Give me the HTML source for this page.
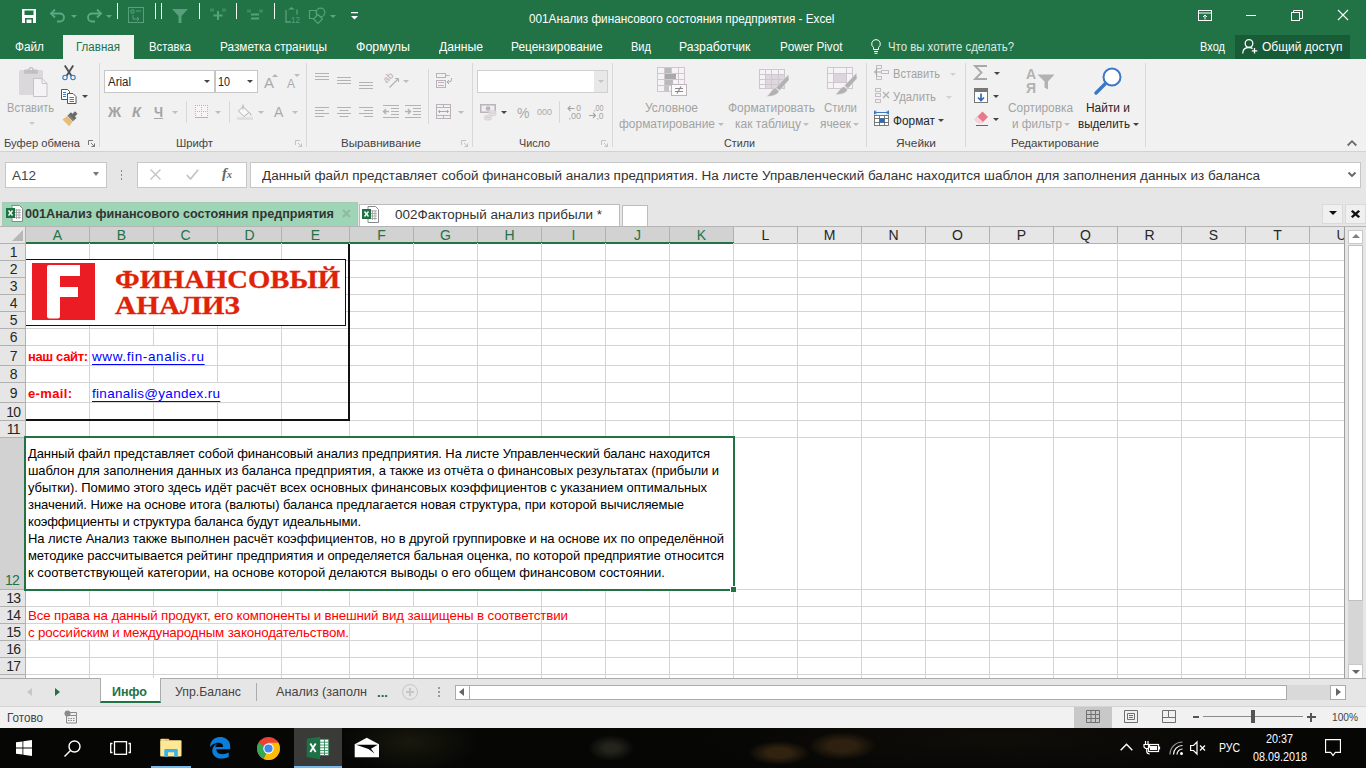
<!DOCTYPE html>
<html lang="ru"><head><meta charset="utf-8"><title>Excel</title>
<style>
*{box-sizing:border-box;margin:0;padding:0}
html,body{width:1366px;height:768px;overflow:hidden;background:#e6e6e6;font-family:"Liberation Sans",sans-serif;font-size:12px;color:#444}
.abs,.abs *{position:absolute}
#root{position:absolute;left:0;top:0;width:1366px;height:768px;overflow:hidden}
.t{position:absolute;white-space:nowrap;line-height:1}
svg{position:absolute;overflow:visible}
/* title */
#title{left:0;top:0;width:1366px;height:59px;background:#217346}
#title .t{color:#fff}
#hometab{left:63px;top:35px;width:71px;height:25px;background:#f1f1f1}
/* ribbon */
#ribbon{left:0;top:59px;width:1366px;height:93px;background:#f1f1f1;border-bottom:1px solid #d2d2d2}
.sep{position:absolute;top:4px;width:1px;height:84px;background:#dadada}
.glabel{color:#444;font-size:12px}
.dis{color:#a6a6a6}
/* formula bar */
#fbar{left:0;top:152px;width:1366px;height:48px;background:#e6e6e6}
.box{position:absolute;background:#fff;border:1px solid #c6c6c6}
</style></head><body><div id="root">
<div id="title" class="abs">
  <!-- QAT -->
  <svg style="left:22px;top:9px" width="14" height="14" viewBox="0 0 14 14"><path d="M0 0h14v14H0z" fill="#fff"/><rect x="2.5" y="1.5" width="9" height="4.5" fill="#217346"/><rect x="3" y="9" width="8" height="5" fill="#217346"/><rect x="4.5" y="10.5" width="5" height="3.5" fill="#fff"/></svg>
  <svg style="left:50px;top:9px" width="16" height="13" viewBox="0 0 16 13" fill="none" stroke="#5ea783" stroke-width="1.8"><path d="M1 4.5h9a4 4 0 0 1 0 8h-3"/><path d="M5 0.5L1 4.5l4 4"/></svg>
  <svg style="left:71px;top:15px" width="6" height="3" viewBox="0 0 6 3"><path d="M0 0h6L3 3z" fill="#5ea783"/></svg>
  <svg style="left:86px;top:9px" width="16" height="13" viewBox="0 0 16 13" fill="none" stroke="#5ea783" stroke-width="1.8"><path d="M15 4.5h-9a4 4 0 0 0 0 8h3"/><path d="M11 0.5l4 4-4 4"/></svg>
  <svg style="left:106px;top:15px" width="6" height="3" viewBox="0 0 6 3"><path d="M0 0h6L3 3z" fill="#5ea783"/></svg>
  <div style="left:117px;top:3px;width:1px;height:16px;background:#f2f8f4"></div>
  <svg style="left:128px;top:7px" width="16" height="16" viewBox="0 0 16 16" fill="none" stroke="#57a07b" stroke-width="1"><rect x=".5" y=".5" width="15" height="15"/><path d="M3 3h3v3H3zM8 4h5M5 8v4h6M9 10l2 2-2 2" /></svg>
  <div style="left:155px;top:3px;width:1px;height:16px;background:#f2f8f4"></div>
  <div style="left:161px;top:3px;width:1px;height:16px;background:#f2f8f4"></div>
  <svg style="left:172px;top:9px" width="16" height="14" viewBox="0 0 16 14"><path d="M0 0h16L9.5 7v7h-3V7z" fill="#57a07b"/></svg>
  <div style="left:199px;top:3px;width:1px;height:16px;background:#f2f8f4"></div>
  <svg style="left:209px;top:6px" width="18" height="16" viewBox="209 6 18 16" fill="none" stroke="#57a07b"><path d="M211 8.500v3M213 8.500v3M223 8.500v3M225 8.500v3" stroke-width="1"/><path d="M213.500 15.500h9M218 11v9" stroke-width="2"/></svg>
  <div style="left:236px;top:3px;width:1px;height:16px;background:#f2f8f4"></div>
  <svg style="left:246px;top:6px" width="18" height="16" viewBox="246 6 18 16" fill="none" stroke="#57a07b"><path d="M248 9.500v3M250 9.500v3M260 9.500v3M262 9.500v3" stroke-width="1"/><path d="M251 14.500h8M251 18.500h8" stroke-width="2"/></svg>
  <div style="left:274px;top:3px;width:1px;height:16px;background:#f2f8f4"></div>
  <svg style="left:284px;top:6px" width="17" height="18" viewBox="284 6 17 18" fill="none" stroke="#57a07b" stroke-width="1.300"><path d="M286 10v12h5"/><path d="M288 9.500l3.500-2.500 3.500 2.500z" fill="#57a07b" stroke="none"/><path d="M297 9.500v5"/><text x="291" y="22.500" font-size="8.500" fill="#57a07b" stroke="none" font-family="Liberation Sans" textLength="9" lengthAdjust="spacingAndGlyphs">12</text></svg>
  <svg style="left:308px;top:6px" width="18" height="18" viewBox="308 6 18 18" fill="none" stroke="#57a07b" stroke-width="1.200"><path d="M309.500 10.500h7v8h-7z"/><circle cx="320.500" cy="12.500" r="4.300"/><path d="M318 14.500l4.500 4.500-4.500 4.500-4.500-4.500z" fill="#217346"/></svg>
  <svg style="left:330px;top:15px" width="6" height="3" viewBox="0 0 6 3"><path d="M0 0h6L3 3z" fill="#5ea783"/></svg>
  <svg style="left:351px;top:12px" width="7" height="8" viewBox="0 0 7 8"><path d="M0 0h7v1.2H0z M0 4h7L3.5 7.5z" fill="#fff"/></svg>
  <!-- title text -->
  <div class="t" id="ttl" style="transform-origin:0 0;transform:scaleX(0.9779);left:529px;top:13px;font-size:12px">001Анализ финансового состояния предприятия - Excel</div>
  <!-- window controls -->
  <svg style="left:1198px;top:10px" width="14" height="11" viewBox="0 0 14 11" fill="none" stroke="#fff" stroke-width="1"><rect x=".5" y=".5" width="13" height="10"/><path d="M.5 3h13" /><path d="M7 9.5V5M5 7l2-2 2 2"/></svg>
  <div style="left:1246px;top:15px;width:10px;height:1px;background:#fff"></div>
  <svg style="left:1291px;top:10px" width="12" height="11" viewBox="0 0 12 11" fill="none" stroke="#fff" stroke-width="1"><rect x=".5" y="2.5" width="8" height="8"/><path d="M2.5 2.5v-2h9v8h-3"/></svg>
  <svg style="left:1338px;top:10px" width="10" height="10" viewBox="0 0 10 10" fill="none" stroke="#fff" stroke-width="1.1"><path d="M0 0l10 10M10 0L0 10"/></svg>
  <!-- tabs -->
  <div id="hometab"></div>
  <div class="t tb" style="transform-origin:0 0;transform:scaleX(0.9436);left:15px">Файл</div>
  <div class="t tb" style="transform-origin:0 0;transform:scaleX(0.9248);left:76px;color:#217346">Главная</div>
  <div class="t tb" style="transform-origin:0 0;transform:scaleX(0.9038);left:149px">Вставка</div>
  <div class="t tb" style="transform-origin:0 0;transform:scaleX(0.9435);left:220px">Разметка страницы</div>
  <div class="t tb" style="transform-origin:0 0;transform:scaleX(0.9925);left:356px">Формулы</div>
  <div class="t tb" style="transform-origin:0 0;transform:scaleX(0.9741);left:438.5px">Данные</div>
  <div class="t tb" style="transform-origin:0 0;transform:scaleX(0.9479);left:511px">Рецензирование</div>
  <div class="t tb" style="transform-origin:0 0;transform:scaleX(0.8840);left:631px">Вид</div>
  <div class="t tb" style="transform-origin:0 0;transform:scaleX(0.9807);left:679px">Разработчик</div>
  <div class="t tb" style="transform-origin:0 0;transform:scaleX(0.9370);left:779.5px">Power Pivot</div>
  <svg style="left:871px;top:39px" width="10" height="15" viewBox="0 0 10 15" fill="none" stroke="#fff" stroke-width="1"><path d="M5 .6a4.3 4.300 0 0 0-2.500 7.800V10.500h5V8.400A4.300 4.300 0 0 0 5 .6z"/><path d="M3 12.500h4M3.500 14.300h3"/></svg>
  <div class="t tb" style="transform-origin:0 0;transform:scaleX(0.9118);left:888px;color:#dcebe2">Что вы хотите сделать?</div>
  <div class="t tb" style="transform-origin:0 0;transform:scaleX(0.8840);left:1200px">Вход</div>
  <div style="left:1235px;top:35px;width:115px;height:24px;background:#185c37"></div>
  <svg style="left:1242px;top:39px" width="16" height="15" viewBox="0 0 16 15" fill="none" stroke="#fff" stroke-width="1.300"><circle cx="7" cy="4.500" r="3.800"/><path d="M.7 14.500c0-4 2.800-6 6.300-6 1.500 0 2.700.4 3.600 1"/><path d="M12.500 9v5.500M9.800 11.800h5.500"/></svg>
  <div class="t tb" style="transform-origin:0 0;transform:scaleX(0.9585);left:1261.5px">Общий доступ</div>
</div>
<style>.tb{top:41.400px;font-size:12.500px}</style>
<div id="ribbon" class="abs"></div>
<div class="abs" id="rb" style="left:0;top:0;width:1366px;height:152px">
<style>
#rb .t{font-size:12.5px}
#rb .lb{top:137.500px;color:#444;font-size:11px}
#rb .d{color:#a3a3a3}
#rb .k{color:#262626}
.vs{position:absolute;width:1px;background:#d8d8d8}
.ar{position:absolute;width:0;height:0;border-left:3px solid transparent;border-right:3px solid transparent;border-top:3px solid #bdbdbd}
.ar.k{border-top-color:#444}
</style>
<!-- group separators -->
<div class="vs" style="left:99px;top:63px;height:84px"></div>
<div class="vs" style="left:306px;top:63px;height:84px"></div>
<div class="vs" style="left:472px;top:63px;height:84px"></div>
<div class="vs" style="left:612px;top:63px;height:84px"></div>
<div class="vs" style="left:866px;top:63px;height:84px"></div>
<div class="vs" style="left:965px;top:63px;height:84px"></div>
<div class="vs" style="left:1145px;top:63px;height:84px"></div>
<!-- group labels -->
<div class="t lb" style="transform-origin:0 0;transform:scaleX(1.0167);left:4px">Буфер обмена</div>
<div class="t lb" style="transform-origin:0 0;transform:scaleX(1.0220);left:176px">Шрифт</div>
<div class="t lb" style="transform-origin:0 0;transform:scaleX(1.0565);left:341px">Выравнивание</div>
<div class="t lb" style="transform-origin:0 0;transform:scaleX(0.9798);left:519px">Число</div>
<div class="t lb" style="transform-origin:0 0;transform:scaleX(0.9778);left:724px">Стили</div>
<div class="t lb" style="transform-origin:0 0;transform:scaleX(1.0838);left:896px">Ячейки</div>
<div class="t lb" style="transform-origin:0 0;transform:scaleX(1.0502);left:1011px">Редактирование</div>
<!-- launchers -->
<svg class="ln" style="left:88px;top:140px" width="7" height="7" viewBox="0 0 7 7" fill="none" stroke="#777" stroke-width="1"><path d="M.5 5V.5H5M3 3l3.500 3.500M6.500 3.500v3h-3"/></svg>
<svg class="ln" style="left:295px;top:140px" width="7" height="7" viewBox="0 0 7 7" fill="none" stroke="#c3c3c3" stroke-width="1"><path d="M.5 5V.5H5M3 3l3.500 3.500M6.500 3.500v3h-3"/></svg>
<svg class="ln" style="left:461px;top:140px" width="7" height="7" viewBox="0 0 7 7" fill="none" stroke="#c3c3c3" stroke-width="1"><path d="M.5 5V.5H5M3 3l3.500 3.500M6.500 3.500v3h-3"/></svg>
<svg class="ln" style="left:601px;top:140px" width="7" height="7" viewBox="0 0 7 7" fill="none" stroke="#c3c3c3" stroke-width="1"><path d="M.5 5V.5H5M3 3l3.500 3.500M6.500 3.500v3h-3"/></svg>
<svg style="left:1347px;top:140px" width="10" height="6" viewBox="0 0 10 6" fill="none" stroke="#6a6a6a" stroke-width="1.800"><path d="M.7 5.500L5 1.200l4.300 4.300"/></svg>

<!-- CLIPBOARD -->
<svg style="left:18px;top:66px" width="31" height="32" viewBox="18 66 31 32" fill="none"><rect x="19" y="70" width="24" height="25" rx="1.500" fill="#dbd8db"/><path d="M24.200 73.700v-3.200a1 1 0 0 1 1-1h3.300a2.500 2.500 0 0 1 5 0h3.300a1 1 0 0 1 1 1v3.200z" fill="#c2bfc2"/><circle cx="31" cy="69.300" r="1" fill="#f1f1f1"/><path d="M33.500 78.500h8.500l5 5v13H33.500z" fill="#f6f3f7" stroke="#c6c2c6"/><path d="M42 78.500v5h5" stroke="#c6c2c6"/></svg>
<div class="t d" style="transform-origin:0 0;transform:scaleX(0.8868);left:7px;top:102.400px">Вставить</div>
<div class="ar" style="left:29px;top:122px;border-top-color:#c8c8c8"></div>
<svg style="left:60px;top:64px" width="18" height="18" viewBox="60 64 18 18" fill="none"><path d="M64.800 65.500l6.700 10.500M73.200 65.500L66.500 76" stroke="#505050" stroke-width="1.900"/><circle cx="65" cy="77.500" r="2.200" stroke="#3b78c4" stroke-width="1.100"/><circle cx="73" cy="77.500" r="2.200" stroke="#3b78c4" stroke-width="1.100"/></svg>
<svg style="left:61px;top:89px" width="16" height="15" viewBox="0 0 16 15" fill="#fff" stroke="#555" stroke-width="1"><path d="M.5.5h6l2 2v8h-8z"/><path d="M6.500 4.500h5.500l3 3v7H6.500z"/><path d="M2 3.500h3M2 5.500h3M2 7.500h3" stroke="#3b78c4"/><path d="M8.500 8.500h4.500M8.500 10.500h4.500M8.500 12.500h4.500" stroke="#3b78c4"/></svg>
<div class="ar k" style="left:82px;top:95px"></div>
<svg style="left:60px;top:110px" width="19" height="17" viewBox="60 110 19 17"><g transform="translate(70 118.800) rotate(45)"><rect x="-1.800" y="-8.800" width="3.600" height="4" fill="#6a6a6a"/><rect x="-3.900" y="-5.200" width="7.800" height="4.900" fill="#6a6a6a"/><rect x="-3.900" y="-2" width="7.800" height=".7" fill="#9a9a9a"/><path d="M-3.900 0h7.800l.9 5.900h-9.600z" fill="#e9bc78"/></g></svg>

<!-- FONT -->
<div class="box" style="left:104px;top:70px;width:111px;height:23px"></div>
<div class="box" style="left:215px;top:70px;width:43px;height:23px"></div>
<div class="t k" style="transform-origin:0 0;transform:scaleX(0.9194);left:108px;top:76px;font-size:12.5px">Arial</div>
<div class="ar k" style="left:204px;top:80px"></div>
<div class="t k" style="transform-origin:0 0;transform:scaleX(0.8629);left:218px;top:76px;font-size:12.5px">10</div>
<div class="ar k" style="left:247px;top:80px"></div>
<div class="t" style="left:264px;top:75px;font-size:15px;color:#a9a9a9">A</div><div class="ar" style="left:272px;top:74px;border-top:none;border-bottom:3px solid #b5b5b5"></div>
<div class="t" style="left:287px;top:78px;font-size:12px;color:#a9a9a9">A</div><div class="ar" style="left:294px;top:74px"></div>
<div class="t" style="transform-origin:0 0;transform:scaleX(1.0272);left:108px;top:105px;font-size:14px;font-weight:bold;color:#a3a3a3">Ж</div>
<div class="t" style="transform-origin:0 0;transform:scaleX(1.0454);left:132px;top:105px;font-size:14px;font-weight:bold;font-style:italic;color:#a3a3a3">К</div>
<div class="t" style="transform-origin:0 0;transform:scaleX(0.9143);left:154px;top:105px;font-size:14px;font-weight:bold;color:#a3a3a3;border-bottom:1px solid #a9a9a9;padding-bottom:0;height:14px">Ч</div>
<div class="ar" style="left:172px;top:111px"></div>
<div class="vs" style="left:186px;top:101px;height:22px"></div>
<svg style="left:195px;top:105px" width="14" height="14" viewBox="0 0 14 14" fill="none"><rect x="0" y="0" width="13" height="13" fill="#f7f3f7"/><path d="M.5 0v13M6.500 0v13M12.500 0v13M0 .5h13M0 6.500h13" stroke="#bfb3bf" stroke-width="1" stroke-dasharray="1 1"/><path d="M0 12.500h13" stroke="#b4b4b4"/></svg>
<div class="ar" style="left:215px;top:111px"></div>
<div class="vs" style="left:229px;top:101px;height:22px"></div>
<svg style="left:237px;top:104px" width="16" height="16" viewBox="0 0 16 16" fill="none" stroke="#b0b0b0" stroke-width="1"><path d="M6 2.500l6 6-5 4-5.500-5.500z" fill="#f8f8f8"/><path d="M6 0.500v5"/><path d="M12.500 8.500c1 1 1.500 2 1.500 3" /><rect x="0" y="13" width="16" height="3" fill="#e2dfe2" stroke="none"/></svg>
<div class="ar" style="left:258px;top:111px"></div>
<div class="t" style="left:274px;top:105px;font-size:14px;color:#a9a9a9">A</div>
<div class="ar" style="left:292px;top:111px"></div>

<!-- ALIGNMENT -->
<svg style="left:315px;top:72px" width="15" height="9" viewBox="0 0 15 9" stroke="#b3b3b3" stroke-width="1"><path d="M0 1.500h14M0 4.500h14M0 7.500h14"/></svg>
<svg style="left:337px;top:76px" width="15" height="9" viewBox="0 0 15 9" stroke="#b3b3b3" stroke-width="1"><path d="M0 1.500h14M0 4.500h14M0 7.500h14"/></svg>
<svg style="left:359px;top:81px" width="15" height="9" viewBox="0 0 15 9" stroke="#b3b3b3" stroke-width="1"><path d="M0 1.500h14M0 4.500h14M0 7.500h14"/></svg>
<svg style="left:382px;top:70px" width="20" height="20" viewBox="382 70 20 20" fill="none" stroke="#b0b0b0" stroke-width="1.100"><path d="M389.500 87.500L398.500 78.500M398.500 78.500h-3.500M398.500 78.500v3.500"/><text x="0" y="0" font-size="9.500" font-family="Liberation Sans" fill="#b0b0b0" stroke="none" transform="translate(386.500 83.500) rotate(-45)">ab</text></svg>
<div class="ar" style="left:403px;top:80px"></div>
<div class="vs" style="left:428px;top:69px;height:55px"></div>
<svg style="left:435px;top:72px" width="18" height="17" viewBox="435 72 18 17" fill="none" stroke="#bbb0bb" stroke-width="1"><rect x="436.500" y="73.500" width="9" height="4"/><path d="M445.500 75.500h4"/><rect x="436.500" y="80.500" width="9" height="7"/><path d="M438 82.500h6M438 85.500h6" /><path d="M451.500 78v1.500a2.500 2.500 0 0 1-2.500 2.500h-2M449 80l-2 2 2 2" stroke="#a8a8a8"/></svg>
<svg style="left:315px;top:106px" width="15" height="12" viewBox="0 0 15 12" stroke="#b3b3b3" stroke-width="1"><path d="M0 1.500h14M0 4.500h9M0 7.500h14M0 10.500h9"/></svg>
<svg style="left:337px;top:106px" width="15" height="12" viewBox="0 0 15 12" stroke="#b3b3b3" stroke-width="1"><path d="M0 1.500h14M2.500 4.500h9M0 7.500h14M2.500 10.500h9"/></svg>
<svg style="left:359px;top:106px" width="15" height="12" viewBox="0 0 15 12" stroke="#b3b3b3" stroke-width="1"><path d="M0 1.500h14M5 4.500h9M0 7.500h14M5 10.500h9"/></svg>
<svg style="left:383px;top:105px" width="16" height="14" viewBox="0 0 16 14" stroke="#b3b3b3" stroke-width="1" fill="none"><path d="M0 .5h16M8 3.500h8M8 6.500h8M8 9.500h8M0 12.500h16"/><path d="M6 6.500H.5M3 4L.5 6.500 3 9" stroke-width="1.400"/></svg>
<svg style="left:405px;top:105px" width="16" height="14" viewBox="0 0 16 14" stroke="#b3b3b3" stroke-width="1" fill="none"><path d="M0 .5h16M8 3.500h8M8 6.500h8M8 9.500h8M0 12.500h16"/><path d="M0 6.500h5.500M3 4l2.500 2.500L3 9" stroke-width="1.400"/></svg>
<svg style="left:435px;top:103px" width="18" height="17" viewBox="435 103 18 17" fill="none" stroke="#bbb0bb" stroke-width="1"><rect x="436.500" y="104.500" width="14" height="14"/><path d="M436.500 107.500h14M436.500 115.500h14M443.500 104.500v3M443.500 115.500v3"/><path d="M438.500 111.500h10M440 110l-1.500 1.500 1.500 1.500M447 110l1.500 1.500-1.500 1.500" stroke="#a8a8a8"/></svg>
<div class="ar" style="left:458px;top:111px"></div>

<!-- NUMBER -->
<div class="box" style="left:477px;top:70px;width:131px;height:23px;border-color:#d0d0d0"></div>
<div style="position:absolute;left:594px;top:71px;width:13px;height:21px;background:#e8e8e8"></div>
<div class="ar" style="left:598px;top:80px;border-top-color:#c4c4c4"></div>
<svg style="left:479px;top:103px" width="19" height="19" viewBox="479 103 19 19" fill="none"><rect x="480" y="104" width="16" height="9" fill="#b9b5b9"/><rect x="481.500" y="105.500" width="13" height="6" fill="#efedef"/><circle cx="488" cy="108.500" r="2.300" fill="#b9b5b9"/><ellipse cx="492.500" cy="112" rx="3.800" ry="1.400" fill="#e2dfe2" stroke="#cfcacf" stroke-width=".6"/><ellipse cx="492.500" cy="114.500" rx="3.800" ry="1.400" fill="#e2dfe2" stroke="#cfcacf" stroke-width=".6"/><ellipse cx="488" cy="116.500" rx="3.800" ry="1.400" fill="#e2dfe2" stroke="#cfcacf" stroke-width=".6"/><ellipse cx="488" cy="118.800" rx="3.800" ry="1.400" fill="#e2dfe2" stroke="#cfcacf" stroke-width=".6"/></svg>
<div class="ar k" style="left:501px;top:111px"></div>
<div class="t" style="transform-origin:0 0;transform:scaleX(0.9368);left:516.500px;top:104.500px;font-size:15px;color:#a9a9a9">%</div>
<div class="t" style="transform-origin:0 0;transform:scaleX(0.9458);left:536.500px;top:107px;font-size:9.500px;color:#a9a9a9">000</div>
<div class="vs" style="left:559px;top:101px;height:22px"></div>
<svg style="left:566px;top:103px" width="17" height="18" viewBox="566 103 17 18" fill="#a4a4a4"><text x="576.300" y="110.500" font-size="8.500" font-family="Liberation Sans">0</text><text x="568.500" y="119" font-size="8.500" font-family="Liberation Sans" textLength="12.500" lengthAdjust="spacingAndGlyphs">,00</text><path d="M574.500 108.500h-6.500M570.500 106l-2.500 2.500 2.500 2.500" fill="none" stroke="#a4a4a4" stroke-width="1.100"/></svg>
<svg style="left:588px;top:103px" width="18" height="18" viewBox="588 103 18 18" fill="#a4a4a4"><text x="593.500" y="110.500" font-size="8.500" font-family="Liberation Sans" textLength="10" lengthAdjust="spacingAndGlyphs">,00</text><text x="596.500" y="119" font-size="8.500" font-family="Liberation Sans">,0</text><path d="M589 115.500h6.500M593 113l2.500 2.500-2.500 2.500" fill="none" stroke="#a4a4a4" stroke-width="1.100"/></svg>

<!-- STYLES -->
<svg style="left:656px;top:66px" width="32" height="32" viewBox="656 66 32 32" fill="none"><rect x="657.5" y="67.500" width="27" height="24" fill="#f6f3f6" stroke="#cfc6cf"/><path d="M657.500 73.500h27M657.500 79.500h27M657.500 85.500h27M664.500 67.500v24M671.500 67.500v24M678.500 67.500v24" stroke="#cfc6cf"/><path d="M665 68h6v5h-6z" fill="#b9b9b9"/><path d="M665 74h11v5h-11z" fill="#a9a9a9"/><path d="M665 80h8v5h-8z" fill="#b9b9b9"/><path d="M665 86h4v5h-4z" fill="#c4c4c4"/><rect x="671.500" y="84.500" width="15" height="11" fill="#fbfafb" stroke="#bdb4bd"/><path d="M675 88.500h8M675 91.500h8M681 86.500l-4 7" stroke="#8a8a8a" stroke-width="1.100"/></svg>
<div class="t d" style="transform-origin:0 0;transform:scaleX(0.9601);left:645px;top:102.400px">Условное</div>
<div class="t d" style="transform-origin:0 0;transform:scaleX(0.9564);left:619px;top:118.400px">форматирование</div>
<div class="ar" style="left:718px;top:123px"></div>
<svg style="left:758px;top:66px" width="32" height="32" viewBox="758 66 32 32" fill="none"><rect x="759.500" y="69.500" width="25" height="19" fill="#f6f3f6" stroke="#cfc6cf"/><rect x="766" y="75" width="18" height="13" fill="#ddd8dd"/><path d="M759.500 74.500h25M759.500 79.500h25M759.500 84.500h25M765.500 69.500v19M771.500 69.500v19M778.500 69.500v19" stroke="#cfc6cf"/><path d="M788.500 74.500l.5 5.500-9.500 10.500-3.500-3z" fill="#b2b2b2" stroke="#f1f1f1" stroke-width=".4"/><path d="M775.500 88l3.500 3.200c-1.500 3.800-6.500 5.300-12.500 5 3.500-1.500 4.500-7 9-8.200z" fill="#b2b2b2" stroke="#f1f1f1" stroke-width=".4"/></svg>
<div class="t d" style="transform-origin:0 0;transform:scaleX(0.9590);left:728px;top:102.400px">Форматировать</div>
<div class="t d" style="transform-origin:0 0;transform:scaleX(0.9639);left:735px;top:118.400px">как таблицу</div>
<div class="ar" style="left:803px;top:123px"></div>
<svg style="left:826px;top:66px" width="32" height="32" viewBox="826 66 32 32" fill="none"><rect x="827.500" y="67.500" width="25" height="21" fill="#f6f3f6" stroke="#cfc6cf"/><path d="M827.500 73.500h25M827.500 82.500h25M833.500 67.500v21M846.500 67.500v21" stroke="#cfc6cf"/><rect x="833.500" y="73.500" width="13" height="9" fill="#dbd6db" stroke="#cfc6cf"/><path d="M856.500 73l.5 5.500-9 10-3.500-3z" fill="#b2b2b2" stroke="#f1f1f1" stroke-width=".4"/><path d="M844 86.500l3.500 3.200c-1.500 3.600-6.500 5-12.500 4.800 3.500-1.500 4.500-6.800 9-8z" fill="#b2b2b2" stroke="#f1f1f1" stroke-width=".4"/></svg>
<div class="t d" style="transform-origin:0 0;transform:scaleX(0.9163);left:824px;top:102.400px">Стили</div>
<div class="t d" style="transform-origin:0 0;transform:scaleX(0.9493);left:820px;top:118.400px">ячеек</div>
<div class="ar" style="left:853px;top:123px"></div>

<!-- CELLS -->
<svg style="left:874px;top:65px" width="16" height="16" viewBox="0 0 16 16" fill="none" stroke="#c5bcc5" stroke-width="1"><rect x="2.500" y=".5" width="5" height="3"/><rect x="2.500" y="11.500" width="5" height="3"/><rect x="7.500" y="5.500" width="7" height="3"/><path d="M2.500 3.500v8M7 7H.5M3 4.500L.5 7 3 9.500" stroke="#a8a8a8"/></svg>
<div class="t d" style="transform-origin:0 0;transform:scaleX(0.8868);left:893px;top:68px">Вставить</div>
<div class="ar" style="left:950px;top:73px;border-top-color:#d0d0d0"></div>
<svg style="left:874px;top:88px" width="16" height="16" viewBox="0 0 16 16" fill="none" stroke="#c5bcc5" stroke-width="1"><rect x="1.500" y=".5" width="5" height="3"/><rect x="1.500" y="5.500" width="5" height="3"/><rect x="1.500" y="11.500" width="5" height="3"/><path d="M9 4l6 6M15 4l-6 6" stroke="#b0b0b0" stroke-width="1.200"/></svg>
<div class="t d" style="transform-origin:0 0;transform:scaleX(0.9008);left:893px;top:91px">Удалить</div>
<div class="ar" style="left:946px;top:96px;border-top-color:#d0d0d0"></div>
<svg style="left:874px;top:110px" width="16" height="17" viewBox="0 0 16 17" fill="none" stroke="#6a6a6a" stroke-width=".9"><path d="M.5 2.500h14M.5.5v4M14.500.5v4M2.500 1L.5 2.500l2 1.500M12.500 1l2 1.500-2 1.500" stroke="#2b6cb8"/><rect x=".5" y="5.500" width="14" height="10" fill="#fff"/><path d="M.5 8.500h14M.5 12.500h14M5.500 5.500v10M10.500 5.500v10"/><rect x="5.500" y="8.500" width="5" height="4" fill="#2b6cb8" stroke="none"/></svg>
<div class="t k" style="transform-origin:0 0;transform:scaleX(0.9458);left:893px;top:114.500px">Формат</div>
<div class="ar k" style="left:938px;top:119px"></div>

<!-- EDITING -->
<svg style="left:973px;top:65px" width="15" height="15" viewBox="0 0 15 15" fill="none" stroke="#a9a9a9" stroke-width="1.800"><path d="M14 1H2l6.500 6.500L2 14h12"/></svg>
<div class="ar k" style="left:994px;top:72px"></div>
<svg style="left:974px;top:88px" width="15" height="16" viewBox="0 0 15 16" fill="none"><rect x=".5" y=".5" width="13" height="14" fill="#fff" stroke="#777"/><rect x=".5" y=".5" width="13" height="3" fill="#777" stroke="#777"/><path d="M7 5.500v7M4 9.500l3 3 3-3" stroke="#2b6cb8" stroke-width="1.700"/></svg>
<div class="ar k" style="left:993px;top:95px"></div>
<svg style="left:974px;top:111px" width="15" height="15" viewBox="0 0 15 15"><path d="M8.500 0.500l5.500 5.500-6 6H4L.5 8.500z" fill="#e8798b"/><path d="M.5 8.500L3.500 5.500l5.500 5.500-1.500 1.500H4z" fill="#f6d3d9"/><path d="M2 14.500h12" stroke="#666"/></svg>
<div class="ar k" style="left:993px;top:118.400px"></div>
<svg style="left:1026px;top:67px" width="29" height="28" viewBox="0 0 29 28" fill="#b2b2b2"><text x="0" y="12" font-size="14" font-weight="bold" font-family="Liberation Sans">А</text><text x="0" y="26" font-size="14" font-weight="bold" font-family="Liberation Sans">Я</text><path d="M11.500 7.500h17l-6.500 7v8l-3.500-2v-6z"/></svg>
<div class="t d" style="transform-origin:0 0;transform:scaleX(0.9474);left:1008px;top:102.400px">Сортировка</div>
<div class="t d" style="transform-origin:0 0;transform:scaleX(0.9392);left:1012px;top:118.400px">и фильтр</div>
<div class="ar" style="left:1064px;top:123px"></div>
<svg style="left:1094px;top:67px" width="28" height="28" viewBox="0 0 28 28" fill="none" stroke="#3b78c4"><circle cx="18" cy="10" r="8.500" stroke-width="2" fill="#fff"/><path d="M11.500 16.500L2 26" stroke-width="3.500" stroke-linecap="round"/></svg>
<div class="t k" style="transform-origin:0 0;transform:scaleX(0.9539);left:1086px;top:102.400px">Найти и</div>
<div class="t k" style="transform-origin:0 0;transform:scaleX(0.9288);left:1078px;top:118.400px">выделить</div>
<div class="ar k" style="left:1133px;top:123px"></div>
</div>
<div id="fbar" class="abs"></div>
<div class="abs" id="fb" style="left:0;top:0;width:1366px;height:230px">
<div class="box" style="left:5px;top:162px;width:102px;height:26px"></div>
<div class="t" style="transform-origin:0 0;transform:scaleX(1.0787);left:12px;top:170px;font-size:12.500px;color:#444">A12</div>
<div class="ar" style="left:93px;top:172px;border-top-color:#777;border-left-width:3.500px;border-right-width:3.500px;border-top-width:4px"></div>
<div style="left:121px;top:170px;width:1px;height:2px;background:#8a8a8a;box-shadow:0 4px 0 #8a8a8a,0 8px 0 #8a8a8a"></div>
<div class="box" style="left:137px;top:162px;width:110px;height:26px"></div>
<svg style="left:150px;top:169px" width="11" height="11" viewBox="0 0 11 11" stroke="#c2c2c2" stroke-width="1.300"><path d="M.5.5l10 10M10.500.5l-10 10"/></svg>
<svg style="left:186px;top:169px" width="13" height="11" viewBox="0 0 13 11" fill="none" stroke="#c2c2c2" stroke-width="1.700"><path d="M.8 6l3.700 4L12.200.8"/></svg>
<div class="t" style="left:222px;top:166px;font-family:'Liberation Serif',serif;font-style:italic;font-weight:bold;font-size:15px;color:#666">f<span style="position:static;font-size:10px">x</span></div>
<div class="box" style="left:250px;top:162px;width:1111px;height:26px"></div>
<div class="t" style="transform-origin:0 0;transform:scaleX(1.0788);left:262px;top:170px;font-size:12.500px;color:#333">Данный файл представляет собой финансовый анализ предприятия. На листе Управленческий баланс находится шаблон для заполнения данных из баланса</div>
<svg style="left:1348px;top:172px" width="8" height="5" viewBox="0 0 8 5" fill="none" stroke="#666" stroke-width="1.900"><path d="M.5.5L4 4 7.500.5"/></svg>
<!-- office tab bar -->
<div style="left:2px;top:202px;width:356px;height:25px;background:#9fd5b7;border:1px solid #a9c9b7;border-bottom:none"></div>
<svg class="xl" style="left:6px;top:205px" width="17" height="17" viewBox="0 0 17 17"><path d="M6 .5h7.500l3 3V16.500H6z" fill="#fff" stroke="#8a8a8a"/><path d="M8 5h7M8 7.500h7M8 10h7M8 12.500h7M10.500 4v10M13 4v10" stroke="#9a9a9a" stroke-width=".8"/><rect x="0" y="3" width="9" height="10" fill="#1e7145"/><path d="M2.500 5.500l4 5M6.500 5.500l-4 5" stroke="#fff" stroke-width="1.400"/></svg>
<div class="t" style="transform-origin:0 0;transform:scaleX(1.0108);left:25px;top:208px;font-size:12.5px;font-weight:bold;color:#333">001Анализ финансового состояния предприятия</div>
<svg style="left:342px;top:209px" width="9" height="9" viewBox="0 0 9 9" stroke="#8fb7a1" stroke-width="1.800"><path d="M1 1l7 7M8 1L1 8"/></svg>
<div style="left:359px;top:204px;width:261px;height:23px;background:#fff;border:1px solid #bcbcbc;border-bottom:none"></div>
<svg class="xl" style="left:362px;top:206px" width="17" height="17" viewBox="0 0 17 17"><path d="M6 .5h7.500l3 3V16.500H6z" fill="#fff" stroke="#8a8a8a"/><path d="M8 5h7M8 7.500h7M8 10h7M8 12.500h7M10.500 4v10M13 4v10" stroke="#9a9a9a" stroke-width=".8"/><rect x="0" y="3" width="9" height="10" fill="#1e7145"/><path d="M2.500 5.500l4 5M6.500 5.500l-4 5" stroke="#fff" stroke-width="1.400"/></svg>
<div class="t" style="transform-origin:0 0;transform:scaleX(1.0753);left:395px;top:209px;font-size:12.5px;color:#333">002Факторный анализ прибыли *</div>
<div style="left:622px;top:205px;width:26px;height:22px;background:#fff;border:1px solid #bcbcbc;border-bottom:none"></div>
<div class="box" style="left:1322px;top:204px;width:21px;height:20px;border-color:#dadada;background:#f0f0f0"></div>
<div class="ar" style="left:1328.500px;top:211px;border-top-color:#111;border-left-width:4px;border-right-width:4px;border-top-width:4.500px"></div>
<div class="box" style="left:1345px;top:204px;width:21px;height:20px;border-color:#dadada;background:#f0f0f0"></div>
<svg style="left:1351px;top:210px" width="9" height="8" preserveAspectRatio="none" viewBox="0 0 9 9" stroke="#111" stroke-width="2.500"><path d="M.8.8l7.400 7.400M8.200.8L.8 8.200"/></svg>
<div style="left:0;top:226px;width:1366px;height:1px;background:#b4b4b4"></div>
</div>
<div class="abs" id="grid" style="left:0;top:227px;width:1344px;height:451px;background:#fff;overflow:hidden">
<style>
#grid .ch{top:0;height:16px;background:#e6e6e6;border-right:1px solid #b1b1b1;font-size:14px;color:#262626;text-align:center;line-height:16.500px}
#grid .ch.s{background:#d2d2d2;color:#217346;border-right-color:#b1b1b1}
#grid .rh{left:0;width:26px;background:#e6e6e6;border-bottom:1px solid #b1b1b1;border-right:1px solid #b1b1b1;font-size:14px;color:#262626;text-align:center;letter-spacing:-.8px;padding-left:1.500px}
#grid .vl{top:16px;width:1px;background:#d4d4d4;height:440px}
#grid .hl{left:26px;height:1px;background:#d4d4d4;width:1320px}
#grid .c{white-space:nowrap;line-height:1}
</style>
<div style="left:0;top:0;width:26px;height:16px;background:#e6e6e6;border-right:1px solid #b1b1b1"></div>
<svg style="left:12px;top:3px" width="11" height="11" viewBox="0 0 11 11"><path d="M11 0v11H0z" fill="#b7b7b7"/></svg>
<div style="left:0;top:16px;width:1345px;height:1px;background:#b1b1b1"></div>
<div class="ch s" style="left:26px;width:64px">A</div>
<div class="ch s" style="left:90px;width:64px">B</div>
<div class="ch s" style="left:154px;width:64px">C</div>
<div class="ch s" style="left:218px;width:64px">D</div>
<div class="ch s" style="left:282px;width:68px">E</div>
<div class="ch s" style="left:350px;width:64px">F</div>
<div class="ch s" style="left:414px;width:64px">G</div>
<div class="ch s" style="left:478px;width:64px">H</div>
<div class="ch s" style="left:542px;width:64px">I</div>
<div class="ch s" style="left:606px;width:64px">J</div>
<div class="ch s" style="left:670px;width:64px">K</div>
<div class="ch" style="left:734px;width:64px">L</div>
<div class="ch" style="left:798px;width:64px">M</div>
<div class="ch" style="left:862px;width:64px">N</div>
<div class="ch" style="left:926px;width:64px">O</div>
<div class="ch" style="left:990px;width:64px">P</div>
<div class="ch" style="left:1054px;width:64px">Q</div>
<div class="ch" style="left:1118px;width:64px">R</div>
<div class="ch" style="left:1182px;width:64px">S</div>
<div class="ch" style="left:1246px;width:64px">T</div>
<div class="ch" style="left:1310px;width:64px">U</div>
<div style="left:26px;top:15px;width:708px;height:2px;background:#217346"></div>
<div class="vl" style="left:89px"></div>
<div class="vl" style="left:153px"></div>
<div class="vl" style="left:217px"></div>
<div class="vl" style="left:281px"></div>
<div class="vl" style="left:349px"></div>
<div class="vl" style="left:413px"></div>
<div class="vl" style="left:477px"></div>
<div class="vl" style="left:541px"></div>
<div class="vl" style="left:605px"></div>
<div class="vl" style="left:669px"></div>
<div class="vl" style="left:733px"></div>
<div class="vl" style="left:797px"></div>
<div class="vl" style="left:861px"></div>
<div class="vl" style="left:925px"></div>
<div class="vl" style="left:989px"></div>
<div class="vl" style="left:1053px"></div>
<div class="vl" style="left:1117px"></div>
<div class="vl" style="left:1181px"></div>
<div class="vl" style="left:1245px"></div>
<div class="vl" style="left:1309px"></div>
<div class="vl" style="left:1373px"></div>
<div class="hl" style="top:33px"></div>
<div class="hl" style="top:50px"></div>
<div class="hl" style="top:67px"></div>
<div class="hl" style="top:84px"></div>
<div class="hl" style="top:101px"></div>
<div class="hl" style="top:118px"></div>
<div class="hl" style="top:138px"></div>
<div class="hl" style="top:155px"></div>
<div class="hl" style="top:175px"></div>
<div class="hl" style="top:193px"></div>
<div class="hl" style="top:210px"></div>
<div class="hl" style="top:362px"></div>
<div class="hl" style="top:379px"></div>
<div class="hl" style="top:396px"></div>
<div class="hl" style="top:413px"></div>
<div class="hl" style="top:430px"></div>
<div class="hl" style="top:447px"></div>
<div class="hl" style="top:464px"></div>
<div class="rh" style="top:17px;height:17px;line-height:17px">1</div>
<div class="rh" style="top:34px;height:17px;line-height:17px">2</div>
<div class="rh" style="top:51px;height:17px;line-height:17px">3</div>
<div class="rh" style="top:68px;height:17px;line-height:17px">4</div>
<div class="rh" style="top:85px;height:17px;line-height:17px">5</div>
<div class="rh" style="top:102px;height:17px;line-height:17px">6</div>
<div class="rh" style="top:119px;height:20px;line-height:21px">7</div>
<div class="rh" style="top:139px;height:17px;line-height:17px">8</div>
<div class="rh" style="top:156px;height:20px;line-height:21px">9</div>
<div class="rh" style="top:176px;height:18px;line-height:19px">10</div>
<div class="rh" style="top:194px;height:17px;line-height:17px">11</div>
<div class="rh" style="top:211px;height:152px;background:#d2d2d2;color:#217346;border-right:2px solid #217346;width:26px"><span style="left:0;width:24px;bottom:1px;line-height:15px">12</span></div>
<div class="rh" style="top:363px;height:17px;line-height:17px">13</div>
<div class="rh" style="top:380px;height:17px;line-height:17px">14</div>
<div class="rh" style="top:397px;height:17px;line-height:17px">15</div>
<div class="rh" style="top:414px;height:17px;line-height:17px">16</div>
<div class="rh" style="top:431px;height:17px;line-height:17px">17</div>
<div class="rh" style="top:448px;height:17px;line-height:17px">18</div>
<!-- merged white areas covering gridlines -->
<div style="left:26px;top:211px;width:707px;height:151px;background:#fff"></div>
<!-- picture -->
<div style="left:26px;top:32px;width:320px;height:67px;background:#fff;border:1px solid #111;border-left:none"></div>
<div style="left:32px;top:36px;width:63px;height:57px;background:#ec1c24"></div>
<svg style="left:46px;top:38px" width="36" height="54" viewBox="0 0 36 54"><path d="M3 0h31v11H14v11h18v10H14v19a2.500 2.500 0 0 1-2.500 2.500H3.500A2.500 2.500 0 0 1 1 51V2a2 2 0 0 1 2-2z" fill="#fff"/></svg>
<div class="c" id="fa1" style="transform-origin:0 0;transform:scaleX(1.1477);left:115px;top:40.300px;font-family:'Liberation Serif',serif;font-weight:bold;font-size:25px;color:#df2309;-webkit-text-stroke:.3px #df2309">ФИНАНСОВЫЙ</div>
<div class="c" id="fa2" style="transform-origin:0 0;transform:scaleX(1.1701);left:115px;top:65.800px;font-family:'Liberation Serif',serif;font-weight:bold;font-size:25px;color:#df2309;-webkit-text-stroke:.3px #df2309">АНАЛИЗ</div>
<!-- thick border A1:E10 -->
<div style="left:348px;top:17px;width:2px;height:177px;background:#111"></div>
<div style="left:26px;top:192px;width:324px;height:2px;background:#111"></div>
<!-- row 7,9 --><div style="left:153px;top:119px;width:1px;height:19px;background:#fff"></div><div style="left:153px;top:156px;width:1px;height:19px;background:#fff"></div><div style="left:217px;top:156px;width:1px;height:19px;background:#fff"></div>
<div class="c" style="letter-spacing:-0.355px;left:28px;top:123px;font-size:13px;font-weight:bold;color:#ff0000">наш сайт:</div>
<div class="c" style="letter-spacing:0.622px;left:92px;top:123px;font-size:13.500px;color:#0000ff;text-decoration:underline;text-underline-offset:2.500px">www.fin-analis.ru</div>
<div class="c" style="letter-spacing:0.349px;left:28px;top:160px;font-size:13px;font-weight:bold;color:#ff0000">e-mail:</div>
<div class="c" style="letter-spacing:0.304px;left:92px;top:160px;font-size:13.500px;color:#0000ff;text-decoration:underline;text-underline-offset:2.500px">finanalis@yandex.ru</div>
<!-- A12 text --><style>#grid .a12{left:28px;font-size:13px;color:#000}</style>
<div class="c a12" style="letter-spacing:-0.104px;top:220px">Данный файл представляет собой финансовый анализ предприятия. На листе Управленческий баланс находится</div>
<div class="c a12" style="letter-spacing:-0.070px;top:237px">шаблон для заполнения данных из баланса предприятия, а также из отчёта о финансовых результатах (прибыли и</div>
<div class="c a12" style="letter-spacing:-0.064px;top:254px">убытки). Помимо этого здесь идёт расчёт всех основных финансовых коэффициентов с указанием оптимальных</div>
<div class="c a12" style="letter-spacing:-0.055px;top:271px">значений. Ниже на основе итога (валюты) баланса предлагается новая структура, при которой вычисляемые</div>
<div class="c a12" style="letter-spacing:-0.148px;top:288px">коэффициенты и структура баланса будут идеальными.</div>
<div class="c a12" style="letter-spacing:-0.060px;top:305px">На листе Анализ также выполнен расчёт коэффициентов, но в другой группировке и на основе их по определённой</div>
<div class="c a12" style="letter-spacing:-0.078px;top:322px">методике рассчитывается рейтинг предприятия и определяется бальная оценка, по которой предприятие относится</div>
<div class="c a12" style="letter-spacing:-0.002px;top:339px">к соответствующей категории, на основе которой делаются выводы о его общем финансовом состоянии.</div>
<!-- selection -->
<div style="left:24px;top:209px;width:711px;height:155px;border:2px solid #217346"></div>
<div style="left:730px;top:359px;width:7px;height:7px;background:#217346;border:1px solid #fff"></div>
<!-- rows 14/15 --><div style="left:26px;top:380px;width:515px;height:16px;background:#fff"></div><div style="left:26px;top:397px;width:255px;height:16px;background:#fff"></div>
<div class="c" style="letter-spacing:-0.140px;left:28px;top:382px;font-size:13.330px;color:#ff0000">Все права на данный продукт, его компоненты и внешний вид защищены в соответствии</div>
<div class="c" style="letter-spacing:-0.151px;left:28px;top:399px;font-size:13.330px;color:#ff0000">с российским и международным законодательством.</div>
</div>
<!-- vertical scrollbar -->
<div class="abs" style="left:1344px;top:227px;width:22px;height:452px;background:#e6e6e6">
  <div style="left:0;top:0;width:1px;height:452px;background:#9e9e9e"></div>
  <div style="left:4px;top:3px;width:15px;height:14px;background:#fff;border:1px solid #c8c8c8"></div>
  <div class="ar" style="left:7.500px;top:7px;border-top:none;border-bottom:4.500px solid #808080;border-left-width:4px;border-right-width:4px"></div>
  <div style="left:4px;top:18px;width:15px;height:356px;background:#fff;border:1px solid #c0c0c0"></div>
  <div style="left:4px;top:374px;width:15px;height:63px;background:#d6d6d6"></div>
  <div style="left:4px;top:437px;width:15px;height:15px;background:#fff;border:1px solid #c8c8c8"></div>
  <div class="ar" style="left:7.500px;top:442.500px;border-top:4.500px solid #666;border-left-width:4px;border-right-width:4px"></div>
</div>
<!-- sheet tab bar -->
<div class="abs" id="stabs" style="left:0;top:678px;width:1366px;height:29px;background:#e6e6e6;border-top:1px solid #ababab">
  <div class="ar" style="left:27px;top:9px;border:4px solid transparent;border-right:5px solid #c6c6c6;border-left:none"></div>
  <div class="ar" style="left:55px;top:9px;border:4px solid transparent;border-left:5px solid #217346;border-right:none"></div>
  <div style="left:100px;top:-1px;width:61px;height:25px;background:#fff;border-bottom:2px solid #217346;border-left:1px solid #ababab;border-right:1px solid #ababab"></div>
  <div class="t" style="transform-origin:0 0;transform:scaleX(0.9630);left:112px;top:6px;font-size:13px;font-weight:bold;color:#217346">Инфо</div>
  <div class="t" style="transform-origin:0 0;transform:scaleX(0.9454);left:175px;top:6px;font-size:13px;color:#444">Упр.Баланс</div>
  <div style="left:256px;top:4px;width:1px;height:18px;background:#ababab"></div>
  <div class="t" style="transform-origin:0 0;transform:scaleX(0.9703);left:276px;top:6px;font-size:13px;color:#444">Анализ (заполн</div>
  <div class="t" style="transform-origin:0 0;transform:scaleX(1.0144);left:377px;top:7px;font-size:13px;font-weight:bold;color:#1a6b3c">...</div>
  <div style="left:402px;top:5px;width:16px;height:16px;border:1.500px solid #c6c6c6;border-radius:8px"></div>
  <div style="left:406px;top:12px;width:8px;height:2px;background:#c6c6c6"></div>
  <div style="left:409px;top:9px;width:2px;height:8px;background:#c6c6c6"></div>
  <div style="left:438px;top:8px;width:2px;height:2px;background:#9a9a9a;box-shadow:0 4px 0 #9a9a9a,0 8px 0 #9a9a9a"></div>
  <!-- hscroll -->
  <div style="left:455px;top:6px;width:15px;height:15px;background:#fff;border:1px solid #ababab"></div>
  <div class="ar" style="left:459px;top:9px;border:4px solid transparent;border-right:5px solid #666;border-left:none"></div>
  <div style="left:469px;top:6px;width:818px;height:15px;background:#fff;border:1px solid #ababab"></div>
  <div style="left:1287px;top:6px;width:43px;height:15px;background:#d9d9d9"></div>
  <div style="left:1330px;top:6px;width:16px;height:15px;background:#fff;border:1px solid #ababab"></div>
  <div class="ar" style="left:1336px;top:9px;border:4px solid transparent;border-left:5px solid #666;border-right:none"></div>
</div>
<!-- status bar -->
<div class="abs" id="status" style="left:0;top:706px;width:1366px;height:22px;background:#f1f1f1;border-top:1px solid #d4d4d4">
  <div class="t" style="transform-origin:0 0;transform:scaleX(0.9713);left:7px;top:5px;font-size:12px;color:#444">Готово</div>
  <svg style="left:64px;top:3px" width="14" height="14" viewBox="0 0 14 14"><circle cx="3.500" cy="3.500" r="3" fill="#8a8a8a"/><path d="M2.500 5.500h10v7.500h-10z M5 2.500h7.500v3" fill="none" stroke="#8a8a8a"/><path d="M4 8.500h7M4 10.500h7" stroke="#8a8a8a" stroke-dasharray="1.500 1"/></svg>
  <div style="left:1074px;top:0;width:38px;height:21px;background:#c8c8c8"></div>
  <svg style="left:1086px;top:3px" width="14" height="13" viewBox="0 0 14 13" fill="none" stroke="#707070"><path d="M.5.5h13v12H.5zM.5 4.500h13M.5 8.500h13M5 .5v12M9.500.5v12"/></svg>
  <svg style="left:1124px;top:3px" width="14" height="13" viewBox="0 0 14 13" fill="none" stroke="#707070"><path d="M.5.5h13v12H.5zM3.500 3.500h7v6h-7zM5 5.500h4M5 7.500h4"/></svg>
  <svg style="left:1162px;top:3px" width="14" height="13" viewBox="0 0 14 13" fill="none" stroke="#707070"><path d="M.5.5h13v12H.5zM.5 8.500h13M4.500 .5v8M9.500 .5v8" opacity="0"/><path d="M.5.5h13v12H.5zM.5 7.500h6v-7M6.500 7.500h7"/></svg>
  <div style="left:1193px;top:9px;width:6px;height:2px;background:#555"></div>
  <div style="left:1203px;top:9px;width:100px;height:1px;background:#8a8a8a"></div>
  <div style="left:1251px;top:3px;width:4px;height:13px;background:#555"></div>
  <div style="left:1307px;top:9px;width:9px;height:2px;background:#555"></div>
  <div style="left:1310px;top:5.500px;width:2px;height:9px;background:#555"></div>
  <div class="t" style="transform-origin:0 0;transform:scaleX(0.8837);left:1332px;top:4.500px;font-size:11.500px;color:#444">100%</div>
</div>
<div class="abs" id="task" style="left:0;top:728px;width:1366px;height:40px;background:#060605;overflow:hidden">
  <div style="left:0;top:0;width:1366px;height:40px;background:radial-gradient(ellipse 31px 12px at 779px 25px,rgba(50,36,16,.95) 40%,transparent),radial-gradient(ellipse 34px 14px at 842px 18px,rgba(48,34,16,.95) 40%,transparent),radial-gradient(ellipse 23px 13px at 611px 20px,rgba(44,44,34,.8) 30%,transparent),radial-gradient(ellipse 70px 30px at 410px 14px,rgba(26,26,14,.9),transparent),radial-gradient(ellipse 300px 40px at 1000px 10px,rgba(16,14,8,.9),transparent)"></div>
  <!-- start -->
  <svg style="left:16px;top:12px" width="16" height="16" viewBox="0 0 16 16" fill="#fff"><path d="M0 2.300L6.500 1.400V7.600H0zM7.300 1.300L16 0v7.600H7.300zM0 8.400h6.500v6.200L0 13.700zM7.300 8.400H16V16l-8.700-1.300z"/></svg>
  <!-- search -->
  <svg style="left:64px;top:12px" width="17" height="17" viewBox="0 0 17 17" fill="none" stroke="#fff" stroke-width="1.400"><circle cx="10.500" cy="6.500" r="5.500"/><path d="M6.500 10.500L.5 16.500"/></svg>
  <!-- task view -->
  <svg style="left:110px;top:13px" width="21" height="14" viewBox="0 0 21 14" fill="none" stroke="#fff" stroke-width="1.300"><rect x="4.500" y=".7" width="12" height="12.600"/><path d="M2.500 2.500H.7v9h1.800M18.500 2.500h1.800v9h-1.800"/></svg>
  <!-- explorer -->
  <svg style="left:159px;top:9px" width="24" height="22" viewBox="159 737 24 22"><path d="M160.200 740a1.200 1.200 0 0 1 1.200-1.200h7.200l1.300 1.600h-9.700z" fill="#f2c744"/><rect x="161.300" y="739.500" width="3.500" height=".9" fill="#fff8e0"/><rect x="160.200" y="740.200" width="21.300" height="16.200" rx="1" fill="#ffe793"/><path d="M164.300 756.700v-6.600a1.200 1.200 0 0 1 1.200-1.200h11.100a1.200 1.200 0 0 1 1.200 1.200v6.600h-3.600v-4.400h-6.200v4.400z" fill="#38b2ec"/></svg>
  <div style="left:151px;top:38px;width:40px;height:2px;background:#76b9ed"></div>
  <!-- edge -->
  <svg style="left:208px;top:8px" width="25" height="24" viewBox="208 736 25 24"><g transform="translate(210 737) scale(1.106 1.029) translate(-2.740 -2)"><path d="M2.740 10.810c.36-3.320 2.350-8.810 9.340-8.810 4.190 0 6.610 2.500 7.730 4.490.96 1.720 1.190 3.690 1.190 5.460v2.050H8.450c.08 4.430 4.160 4.720 5.550 4.720 2.600 0 4.600-1.010 5.660-1.630v4.330c-1.330.79-3.600 1.580-6.920 1.580-5.620 0-7.930-4.330-7.930-7.400 0-4.240 3.100-6.550 4.180-7.020-.35.35-1.170 1.330-1.340 3.130h6.930s.42-4.140-3.910-4.140c-4.080 0-7 2.500-7.930 4.240z" fill="#0a7edb"/></g></svg>
  <!-- chrome -->
  <svg style="left:257px;top:9px" width="23" height="23" viewBox="0 0 23 23"><circle cx="11.500" cy="11.500" r="11.500" fill="#ea4335"/><path d="M11.500 11.500L1.540 5.750A11.500 11.500 0 0 0 6.700 21.950z" fill="#34a853"/><path d="M11.500 11.500L6.700 21.950A11.500 11.500 0 0 0 21.460 5.750H11.500z" fill="#fbbc05"/><path d="M11.500 11.500l4.800 10.450-9.600 0z" fill="#fbbc05" opacity="0"/><circle cx="11.500" cy="11.500" r="5.200" fill="#fff"/><circle cx="11.500" cy="11.500" r="4.100" fill="#4285f4"/></svg>
  <!-- excel -->
  <div style="left:294px;top:0;width:48px;height:40px;background:#3a3a38"></div>
  <div style="left:294px;top:38px;width:48px;height:2px;background:#76b9ed"></div>
  <svg style="left:305px;top:8px" width="25" height="24" viewBox="305 736 25 24"><rect x="318" y="739.200" width="10.800" height="16.400" fill="#fff" stroke="#1e7145" stroke-width=".8"/><path d="M320 742.200h8.800M320 745h8.800M320 747.800h8.800M320 750.600h8.800M320 753.200h8.800M324.500 739.500v16" stroke="#2d8a57" stroke-width=".9"/><path d="M306.700 738.800L320.200 736.700v22.500L306.700 757z" fill="#1e7145"/><path d="M310.300 743.500l5.400 8.600M315.700 743.500l-5.400 8.600" stroke="#fff" stroke-width="1.800"/></svg>
  <!-- mail -->
  <svg style="left:353px;top:8px" width="28" height="24" viewBox="353 736 28 24"><path d="M354.700 744.300L366.800 737.700 379 744.300V757.200H354.700z" fill="#fff"/><path d="M356 744.800h21.700l-6.700 4 3.500 4.600-6-4.300z" fill="#060605"/></svg>
  <!-- tray -->
  <svg style="left:1120px;top:15px" width="13" height="8" viewBox="0 0 13 8" fill="none" stroke="#fff" stroke-width="1.400"><path d="M.7 7.300L6.500 1.300l5.800 6"/></svg>
  <svg style="left:1143px;top:13px" width="17" height="14" viewBox="0 0 17 14" fill="none" stroke="#fff" stroke-width="1.200"><rect x="5.500" y="3.500" width="10" height="7"/><path d="M16.500 5.500v3"/><rect x="7" y="5" width="7" height="4" fill="#fff" stroke="none"/><path d="M2.500 0v3M5 0v3M1 3.500h5.500v2.500L5 7.500H2.500L1 6zM3.700 7.500V10c0 2 1.500 3 3 3" /></svg>
  <svg style="left:1169px;top:13px" width="15" height="15" viewBox="0 0 15 15" fill="none" stroke="#fff" stroke-width="1.200"><path d="M1 13.500A12.500 12.500 0 0 1 13.500 1" opacity=".6"/><path d="M4.500 13.500a9 9 0 0 1 9-9"/><path d="M8 13.500a5.500 5.500 0 0 1 5.500-5.500"/><circle cx="12.500" cy="12.500" r="1.500" fill="#fff" stroke="none"/></svg>
  <svg style="left:1190px;top:13px" width="16" height="14" viewBox="0 0 16 14" fill="none" stroke="#fff" stroke-width="1.200"><path d="M.6 4.500h2.900l3.500-3.500v12L3.500 9.500H.6z"/><path d="M10 4.500l5 5M15 4.500l-5 5"/></svg>
  <div class="t" style="transform-origin:0 0;transform:scaleX(0.8739);left:1219px;top:14px;font-size:12px;color:#fff">РУС</div>
  <div class="t" style="transform-origin:0 0;transform:scaleX(0.8991);left:1266px;top:5px;font-size:12px;color:#fff">20:37</div>
  <div class="t" style="transform-origin:0 0;transform:scaleX(0.8991);left:1253px;top:23px;font-size:12px;color:#fff">08.09.2018</div>
  <svg style="left:1325px;top:11px" width="16" height="18" viewBox="0 0 17 18" preserveAspectRatio="none" fill="none" stroke="#fff" stroke-width="1.200"><path d="M.6.6h15.800v12.800H11L8.500 16.500 6 13.400H.6z"/></svg>
</div>
</div></body></html>
